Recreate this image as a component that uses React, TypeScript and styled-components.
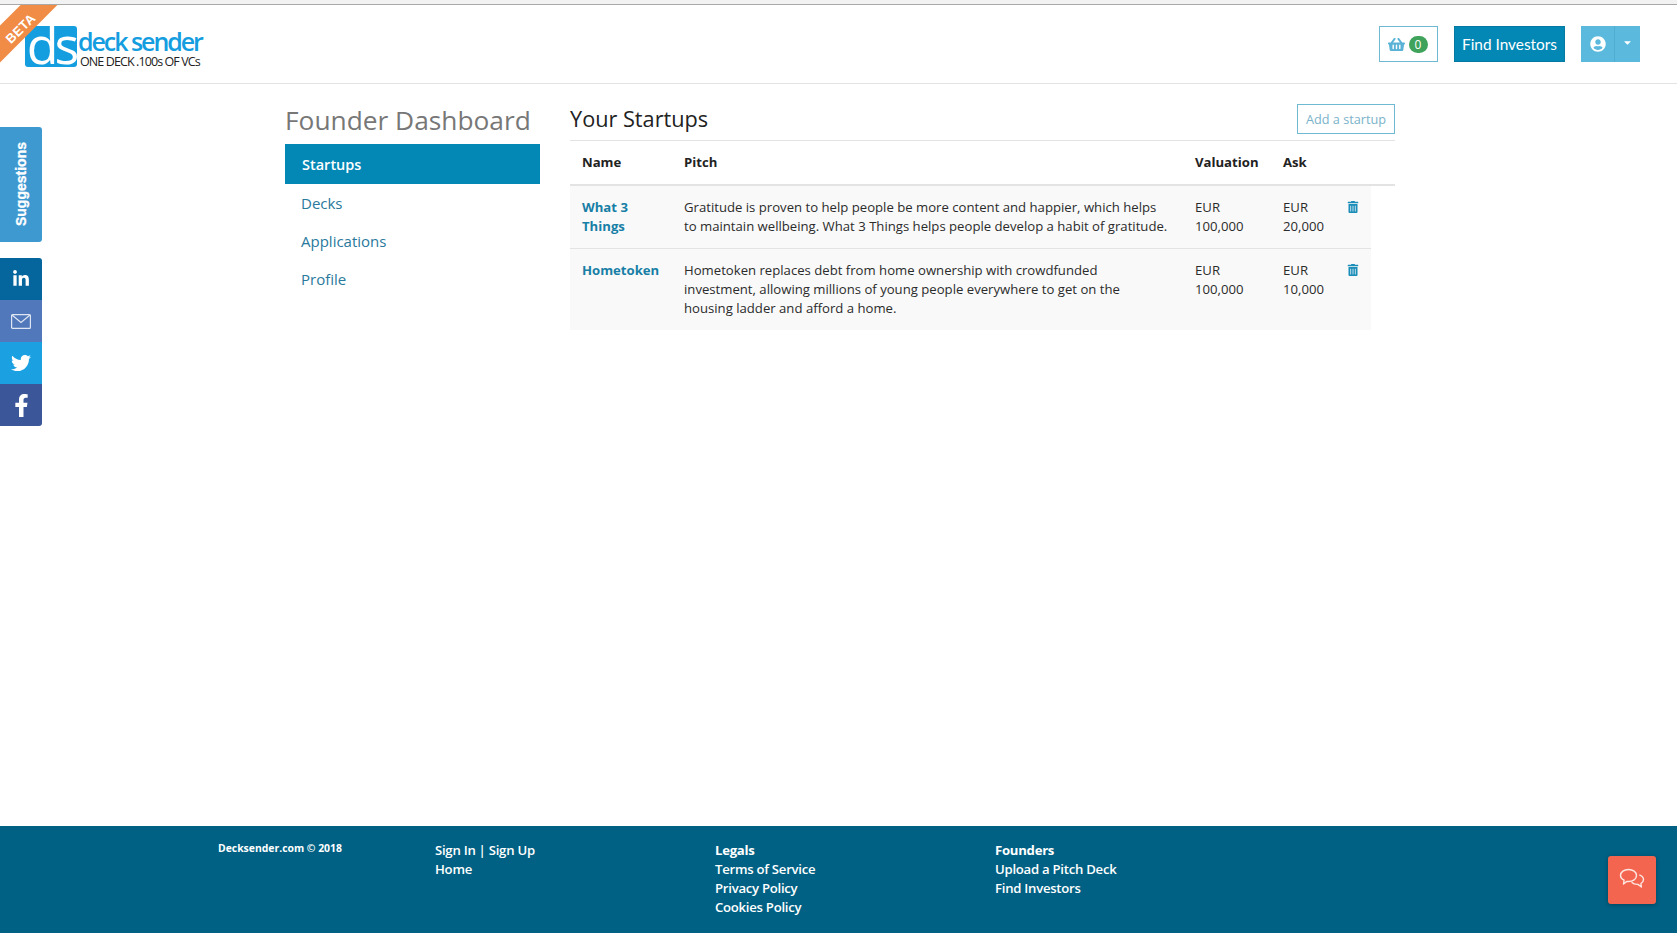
import React from "react";
import styled, { createGlobalStyle } from "styled-components";
import { FaShoppingBasket, FaUserCircle, FaCaretDown, FaTrashAlt, FaLinkedinIn, FaTwitter, FaFacebookF } from "react-icons/fa";

const Global = createGlobalStyle`
  html, body { margin: 0; padding: 0; background: #fff; }
  body { font-family: "Open Sans", "Liberation Sans", sans-serif; color: #222; }
  * { box-sizing: border-box; }
`;

const Page = styled.div`
  position: relative;
  width: 1677px;
  height: 933px;
  overflow: hidden;
  display: flex;
  flex-direction: column;
`;

const BrowserEdge = styled.div`
  height: 5px;
  background: #f2f2f2;
  border-bottom: 1px solid #a9a9a9;
  flex: none;
`;

const Header = styled.header`
  position: relative;
  height: 79px;
  flex: none;
  display: flex;
  align-items: flex-start;
  justify-content: space-between;
  padding: 21px 37px 0 25px;
  border-bottom: 1px solid #e3e3e3;
`;

const RibbonClip = styled.div`
  position: absolute;
  left: 0;
  top: 0;
  width: 60px;
  height: 60px;
  overflow: hidden;
`;

const Ribbon = styled.div`
  position: absolute;
  left: -42px;
  top: 8px;
  width: 120px;
  height: 26px;
  background: #f08c46;
  color: #fff;
  font: bold 13px/34px "Liberation Sans", sans-serif;
  letter-spacing: 0.3px;
  text-align: center;
  transform: rotate(-45deg);
`;

const Logo = styled.div`
  display: flex;
  align-items: flex-start;
  gap: 1px;
`;

const LogoMark = styled.div`
  width: 52px;
  height: 41px;
  border-radius: 3px;
  background: #149ddf;
  color: #fff;
  font: 400 52px/36px "Open Sans", sans-serif;
  letter-spacing: -4px;
  text-align: center;
  white-space: nowrap;
`;

const LogoText = styled.div`
  display: flex;
  flex-direction: column;
  padding-top: 3px;
`;

const LogoName = styled.div`
  color: #149ddf;
  font: 600 25px/24px "Open Sans", sans-serif;
  letter-spacing: -2.05px;
  white-space: nowrap;
`;

const LogoTag = styled.div`
  color: #222;
  font: 400 12.5px/14px "Open Sans", sans-serif;
  letter-spacing: -0.9px;
  white-space: nowrap;
  margin: 2px 0 0 2px;
`;

const Actions = styled.div`
  display: flex;
  gap: 16px;
`;

const CartButton = styled.div`
  width: 59px;
  height: 36px;
  border: 1px solid #6fb9d3;
  display: flex;
  align-items: center;
  justify-content: center;
  gap: 4px;
  padding-right: 2px;
  color: #5ab2d6;
  font-size: 17px;
`;

const CountBadge = styled.span`
  width: 19px;
  height: 17px;
  border-radius: 9px;
  background: #3fa35c;
  color: #fff;
  font: 400 12px/17px "Open Sans", sans-serif;
  text-align: center;
`;

const PrimaryButton = styled.div`
  width: 111px;
  height: 36px;
  background: #0388b6;
  border: 1px solid #057ba4;
  color: #fff;
  font: 400 15.4px/35px Lato, "Open Sans", sans-serif;
  text-align: center;
  white-space: nowrap;
`;

const UserSplit = styled.div`
  width: 59px;
  height: 36px;
  background: #5ab9dc;
  color: #fff;
  display: grid;
  grid-template-columns: 33px 26px;
`;

const UserPart = styled.div<{ $divider?: boolean }>`
  display: flex;
  align-items: center;
  justify-content: center;
  font-size: ${(p) => (p.$divider ? "11px" : "16px")};
  padding-bottom: ${(p) => (p.$divider ? "3px" : "0")};
  border-left: ${(p) => (p.$divider ? "1px solid #4eadd0" : "none")};
`;

const Main = styled.main`
  flex: 1;
  display: flex;
  align-items: flex-start;
  padding: 16px 0 0 285px;
  gap: 30px;
`;

const SideColumn = styled.aside`
  width: 255px;
  flex: none;
`;

const Title = styled.h1`
  margin: 0;
  height: 44px;
  font: 400 26.3px/40px "Open Sans", sans-serif;
  color: #777;
  white-space: nowrap;
`;

const Nav = styled.nav`
  display: flex;
  flex-direction: column;
`;

const NavItem = styled.a<{ $active?: boolean }>`
  display: block;
  height: ${(p) => (p.$active ? "40px" : "38px")};
  padding-left: ${(p) => (p.$active ? "17px" : "16px")};
  font: ${(p) => (p.$active ? "600 14.5px/41px" : "400 15px/38px")} "Open Sans", sans-serif;
  color: ${(p) => (p.$active ? "#fff" : "#29799c")};
  background: ${(p) => (p.$active ? "#0388b6" : "transparent")};
`;

const Content = styled.section`
  width: 825px;
  flex: none;
`;

const ContentHead = styled.div`
  display: flex;
  align-items: flex-start;
  justify-content: space-between;
  height: 41px;
  padding-top: 4px;
  border-bottom: 1px solid #e3e3e3;
`;

const SectionTitle = styled.h2`
  margin: 0;
  font: 400 21.7px/30px "Open Sans", sans-serif;
  color: #222;
`;

const OutlineButton = styled.div`
  width: 98px;
  height: 30px;
  border: 1px solid #6fb9d3;
  color: #7ab3c9;
  font: 400 12.7px/28px "Open Sans", sans-serif;
  text-align: center;
  white-space: nowrap;
`;

const Columns = "102px 511px 88px 65px 35px";

const HeadRow = styled.div`
  display: grid;
  grid-template-columns: ${Columns};
  border-bottom: 2px solid #e3e3e3;
`;

const HeadCell = styled.div`
  padding: 12px;
  font: 700 13.15px/19px "Open Sans", sans-serif;
  color: #222;
`;

const BodyRow = styled.div`
  display: grid;
  width: 801px;
  grid-template-columns: ${Columns};
  background: #f9f9f9;
  & + & {
    border-top: 1px solid #e3e3e3;
  }
`;

const Cell = styled.div`
  padding: 12px;
  font: 400 13.15px/19px "Open Sans", sans-serif;
  color: #2b2b2b;
`;

const NameCell = styled(Cell)`
  font-weight: 700;
  color: #177fa6;
`;

const TrashCell = styled(Cell)`
  color: #1a8db8;
  font-size: 12px;
  padding: 13px 0 0 11px;
`;

const SideTab = styled.div`
  position: absolute;
  left: 0;
  top: 127px;
  width: 42px;
  height: 115px;
  background: #3f99d1;
  border-radius: 0 3px 3px 0;
  display: flex;
  align-items: center;
  justify-content: center;
`;

const SideTabLabel = styled.span`
  writing-mode: vertical-rl;
  transform: rotate(180deg);
  color: #fff;
  font: bold 14px "Liberation Sans", sans-serif;
  -webkit-text-stroke: 0.3px #fff;
`;

const SocialBar = styled.div`
  position: absolute;
  left: 0;
  top: 258px;
  width: 42px;
  border-radius: 0 3px 3px 0;
  overflow: hidden;
  display: flex;
  flex-direction: column;
`;

const SocialItem = styled.a<{ $bg: string; $size: number }>`
  height: 42px;
  background: ${(p) => p.$bg};
  color: #fff;
  font-size: ${(p) => p.$size}px;
  display: flex;
  align-items: center;
  justify-content: center;
`;

const Footer = styled.footer`
  height: 107px;
  flex: none;
  background: #006184;
  color: #fff;
  display: grid;
  grid-template-columns: 217px 280px 280px 280px;
  padding: 14px 0 0 218px;
`;

const Copyright = styled.div`
  font: 700 10.4px/16px "Open Sans", sans-serif;
`;

const FootList = styled.div`
  display: flex;
  flex-direction: column;
  padding-top: 1px;
  font: 600 13.15px/19px "Open Sans", sans-serif;
  letter-spacing: -0.26px;
`;

const FootHeading = styled.span`
  font-weight: 700;
`;

const ChatButton = styled.div`
  position: absolute;
  left: 1608px;
  top: 856px;
  width: 48px;
  height: 48px;
  background: #f4654f;
  border-radius: 3px;
  box-shadow: 0 1px 4px rgba(0, 0, 0, 0.3);
  display: flex;
  align-items: center;
  justify-content: center;
`;

const startups = [
  {
    name: "What 3 Things",
    pitch:
      "Gratitude is proven to help people be more content and happier, which helps to maintain wellbeing. What 3 Things helps people develop a habit of gratitude.",
    val: "100,000",
    ask: "20,000",
  },
  {
    name: "Hometoken",
    pitch:
      "Hometoken replaces debt from home ownership with crowdfunded investment, allowing millions of young people everywhere to get on the housing ladder and afford a home.",
    val: "100,000",
    ask: "10,000",
  },
];

const MailIcon = () => (
  <svg width="20" height="15" viewBox="0 0 20 15" fill="none" stroke="#dfe6f3" strokeWidth="1.2">
    <rect x="0.6" y="0.6" width="18.8" height="13.8" rx="1" />
    <path d="M1 1l9 7.5L19 1" />
  </svg>
);

const ChatIcon = () => (
  <svg width="26" height="26" viewBox="0 0 26 26" fill="none" stroke="#fde6e0" strokeWidth="1.4" strokeLinejoin="round">
    <path d="M9.5 2.500c4.400 0 8 2.500 8 6s-3.600 6-8 6c-.6 0-1.100 0-1.600-.1L4.500 17l.6-3.800C3 12.100 1.500 10.400 1.500 8.500c0-3.500 3.600-6 8-6z" />
    <path d="M20.300 7.800c2.400.9 4.200 2.400 4.200 4.700 0 1.700-1 3.100-2.600 4l.5 3.500-3.400-2.600c-2.600.1-5-.6-6.400-2.200" />
  </svg>
);

export default function App() {
  return (
    <Page>
      <Global />
      <BrowserEdge />
      <Header>
        <RibbonClip>
          <Ribbon>BETA</Ribbon>
        </RibbonClip>
        <Logo>
          <LogoMark>ds</LogoMark>
          <LogoText>
            <LogoName>deck sender</LogoName>
            <LogoTag>ONE DECK .100s OF VCs</LogoTag>
          </LogoText>
        </Logo>
        <Actions>
          <CartButton>
            <FaShoppingBasket />
            <CountBadge>0</CountBadge>
          </CartButton>
          <PrimaryButton>Find Investors</PrimaryButton>
          <UserSplit>
            <UserPart>
              <FaUserCircle />
            </UserPart>
            <UserPart $divider>
              <FaCaretDown />
            </UserPart>
          </UserSplit>
        </Actions>
      </Header>
      <Main>
        <SideColumn>
          <Title>Founder Dashboard</Title>
          <Nav>
            <NavItem $active>Startups</NavItem>
            <NavItem>Decks</NavItem>
            <NavItem>Applications</NavItem>
            <NavItem>Profile</NavItem>
          </Nav>
        </SideColumn>
        <Content>
          <ContentHead>
            <SectionTitle>Your Startups</SectionTitle>
            <OutlineButton>Add a startup</OutlineButton>
          </ContentHead>
          <HeadRow>
            <HeadCell>Name</HeadCell>
            <HeadCell>Pitch</HeadCell>
            <HeadCell>Valuation</HeadCell>
            <HeadCell>Ask</HeadCell>
          </HeadRow>
          {startups.map((s) => (
            <BodyRow key={s.name}>
              <NameCell>{s.name}</NameCell>
              <Cell>{s.pitch}</Cell>
              <Cell>EUR {s.val}</Cell>
              <Cell>EUR {s.ask}</Cell>
              <TrashCell>
                <FaTrashAlt />
              </TrashCell>
            </BodyRow>
          ))}
        </Content>
      </Main>
      <Footer>
        <Copyright>Decksender.com © 2018</Copyright>
        <FootList>
          <span>Sign In | Sign Up</span>
          <span>Home</span>
        </FootList>
        <FootList>
          <FootHeading>Legals</FootHeading>
          <span>Terms of Service</span>
          <span>Privacy Policy</span>
          <span>Cookies Policy</span>
        </FootList>
        <FootList>
          <FootHeading>Founders</FootHeading>
          <span>Upload a Pitch Deck</span>
          <span>Find Investors</span>
        </FootList>
      </Footer>
      <SideTab>
        <SideTabLabel>Suggestions</SideTabLabel>
      </SideTab>
      <SocialBar>
        <SocialItem $bg="#04669c" $size={18}>
          <FaLinkedinIn />
        </SocialItem>
        <SocialItem $bg="#5078ba" $size={20}>
          <MailIcon />
        </SocialItem>
        <SocialItem $bg="#1ba1e2" $size={20}>
          <FaTwitter />
        </SocialItem>
        <SocialItem $bg="#3b5699" $size={23}>
          <FaFacebookF />
        </SocialItem>
      </SocialBar>
      <ChatButton>
        <ChatIcon />
      </ChatButton>
    </Page>
  );
}
